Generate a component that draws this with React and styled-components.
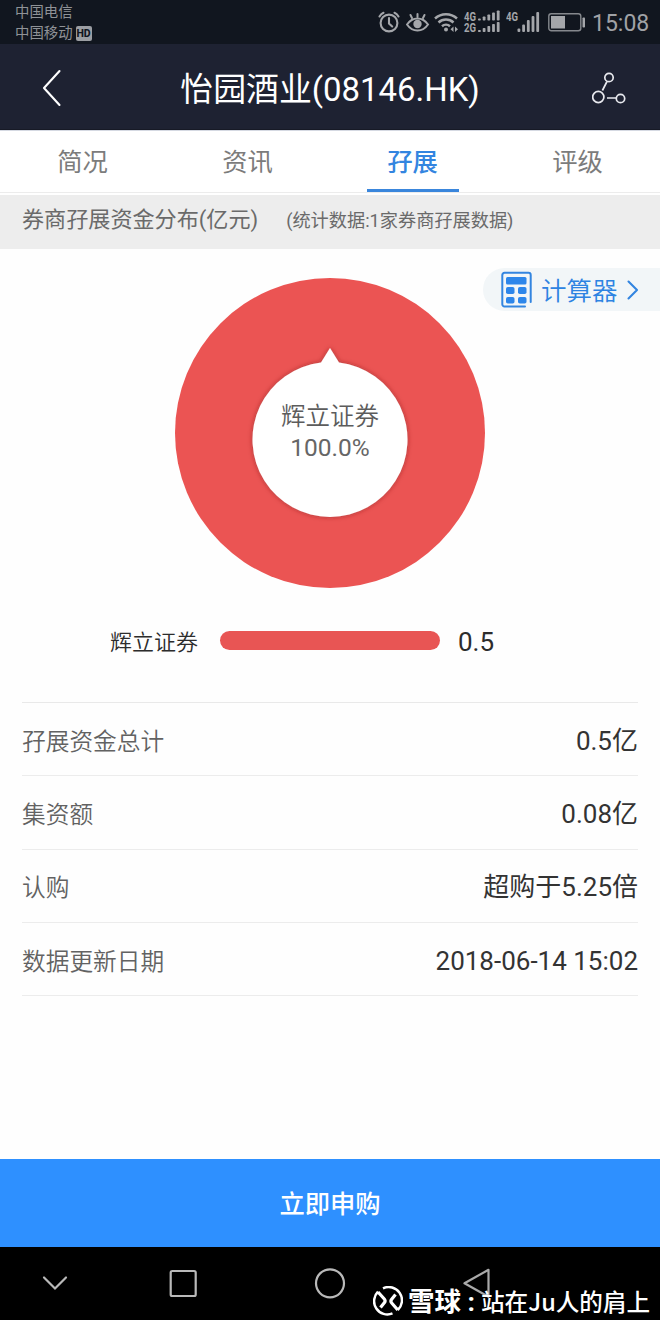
import React, { useState } from 'react';
import styled, { createGlobalStyle } from 'styled-components';

const GlobalStyle = createGlobalStyle`
	* {
		box-sizing: border-box;
	}
	body {
		margin: 0;
		background: #fefefe;
		font-family: Roboto, 'Noto Sans CJK SC', sans-serif;
	}
	button {
		font-family: inherit;
		border: none;
		background: none;
		padding: 0;
		cursor: pointer;
	}
	svg {
		display: block;
		flex: none;
	}
`;

const Screen = styled.div`
	display: flex;
	flex-direction: column;
	width: 660px;
	height: 1320px;
	overflow: hidden;
`;

const StatusBar = styled.div`
	display: flex;
	justify-content: space-between;
	height: 44px;
	padding: 0 14px 0 15px;
	background: #11161f;
	color: #a4a6aa;
`;

const Carriers = styled.div`
	font-size: 14.4px;
	line-height: 21px;
	padding-top: 2px;
	color: #8f9297;
`;

const Carrier = styled.div`
	display: flex;
	align-items: center;
	height: 21px;
`;

const HdBadge = styled.span`
	width: 16px;
	height: 15px;
	margin-left: 3px;
	border-radius: 2px;
	background: #9b9ea3;
	color: #11161f;
	font-size: 10.5px;
	font-weight: 800;
	line-height: 15px;
	text-align: center;
`;

const StatusIcons = styled.div`
	display: flex;
	height: 44px;
`;

const Clock = styled.span`
	width: 54px;
	margin-left: 5px;
	font-size: 23px;
	line-height: 47px;
	white-space: nowrap;
	color: #a0a2a6;
`;

const Header = styled.header`
	display: flex;
	align-items: center;
	justify-content: space-between;
	height: 86px;
	padding: 0 32px 0 40px;
	background: #1e2232;
	border-bottom: 1px solid #171a26;
	color: #fff;
`;

const Title = styled.h1`
	margin: 0 -4px 0 0;
	font-size: 32.9px;
	font-weight: 400;
	line-height: 86px;
	padding-top: 7px;
`;

const Tabs = styled.nav`
	display: grid;
	grid-template-columns: repeat(4, 1fr);
	height: 65px;
	padding-bottom: 2px;
	border-top: 1px solid #d5d9e2;
	background: #fff;
`;

const Tab = styled.button`
	display: flex;
	flex-direction: column;
	align-items: center;
	justify-content: flex-start;
	height: 62px;
	border-bottom: 1px solid #ececec;
	font-size: 25.3px;
	line-height: 60px;
	padding-top: 2px;
	color: ${(props) => (props.$active ? '#3385e0' : '#7c7c7c')};
	font-weight: ${(props) => (props.$active ? 500 : 400)};
	&::after {
		content: '';
		flex: none;
		width: 92px;
		height: 3px;
		margin-top: -4px;
		background: ${(props) => (props.$active ? '#3a86dc' : 'transparent')};
	}
`;

const SectionBar = styled.div`
	display: flex;
	align-items: center;
	height: 54px;
	padding: 0 22px;
	background: #ededed;
	color: #6a6a6a;
`;

const SectionTitle = styled.span`
	font-size: 22.1px;
	line-height: 49px;
	height: 54px;
`;

const SectionNote = styled.span`
	margin-left: 28px;
	font-size: 18.2px;
	line-height: 51px;
	height: 54px;
`;

const ChartArea = styled.section`
	position: relative;
	display: flex;
	justify-content: center;
	height: 339px;
	padding-top: 29px;
`;

const CalculatorLink = styled.button`
	position: absolute;
	top: 19px;
	right: 0;
	display: flex;
	align-items: center;
	width: 177px;
	height: 43px;
	padding-left: 17px;
	border-radius: 22px 0 0 22px;
	background: #f2f6f8;
	color: #2d83e2;
	font-size: 25.5px;
	font-weight: 350;
	line-height: 43px;
`;

const CalculatorText = styled.span`
	margin: 0 9px 0 9px;
	padding-top: 3px;
`;

const Ring = styled.div`
	position: relative;
	width: 310px;
	height: 310px;
`;

const RingLabel = styled.div`
	position: absolute;
	top: 123px;
	left: 0;
	width: 100%;
	text-align: center;
	font-size: 24.5px;
	font-weight: 350;
	line-height: 31px;
	color: #5c5c5c;
`;

const RingPercent = styled.div`
	font-weight: 400;
	color: #666;
`;

const Legend = styled.div`
	display: flex;
	align-items: center;
	height: 114px;
	padding: 0 0 9px 110px;
	color: #2c2c2c;
`;

const LegendName = styled.span`
	width: 110px;
	font-size: 22px;
	font-weight: 350;
	line-height: 32px;
	padding-top: 4px;
`;

const LegendTrack = styled.div`
	width: 220px;
	height: 19px;
`;

const LegendBar = styled.div`
	height: 19px;
	border-radius: 10px;
	background: #e85554;
`;

const LegendValue = styled.span`
	margin-left: 18px;
	font-size: 26px;
	padding-top: 3px;
`;

const Details = styled.dl`
	margin: 0 22px;
	border-top: 1px solid #e9e9e9;
`;

const DetailRow = styled.div`
	display: flex;
	align-items: center;
	justify-content: space-between;
	height: 73.3px;
	padding-top: 3px;
	border-bottom: 1px solid #ececec;
	line-height: 40px;
`;

const DetailLabel = styled.dt`
	padding-top: 2px;
	font-size: 23.7px;
	font-weight: 350;
	color: #626262;
`;

const DetailValue = styled.dd`
	margin: 0;
	font-size: 26px;
	color: #333;
`;

const SubscribeButton = styled.button`
	height: 88px;
	margin-top: auto;
	background: #2e90ff;
	color: #fff;
	font-size: 25.3px;
	font-weight: 500;
	line-height: 88px;
	padding-top: 2px;
`;

const NavBar = styled.div`
	position: relative;
	display: grid;
	grid-template-columns: 128px 147px 147px auto;
	height: 73px;
	padding: 20px 0 0 39px;
	background: #000;
`;

const Watermark = styled.div`
	position: absolute;
	left: 373px;
	top: 36px;
	display: flex;
	align-items: center;
	height: 36px;
	color: #fff;
	white-space: nowrap;
`;

const Brand = styled.span`
	margin-left: 5px;
	width: 73px;
	font-size: 26.5px;
	font-weight: 700;
	line-height: 36px;
	padding-top: 1px;
`;

const Author = styled.span`
	font-family: 'Noto Sans CJK SC', sans-serif;
	font-size: 23.6px;
	font-weight: 500;
	line-height: 36px;
`;

const tabs = ['简况', '资讯', '孖展', '评级'];

const brokers = [{ name: '辉立证券', value: 0.5, percent: 100 }];

const details = [
	{ label: '孖展资金总计', value: '0.5亿' },
	{ label: '集资额', value: '0.08亿' },
	{ label: '认购', value: '超购于5.25倍' },
	{ label: '数据更新日期', value: '2018-06-14 15:02' }
];

// Status bar icons, each one spans the height of the bar

const AlarmIcon = () => (
	<svg width="28" height="44" fill="none" stroke="#a4a6aa" strokeWidth="2.1" strokeLinecap="round">
		<circle cx="11" cy="23" r="8.4" />
		<path d="M11 18v5.5l3.2 3M1.5 16.5a9 9 0 0 1 4-3.7M20.5 16.5a9 9 0 0 0-4-3.7" />
	</svg>
);

const EyeIcon = () => (
	<svg width="28" height="44" fill="none" stroke="#a4a6aa" strokeWidth="2" strokeLinecap="round">
		<path d="M1 24.5c5.5-8 15.500-8 21 0c-5.500 8-15.500 8-21 0z" />
		<circle cx="11.5" cy="24" r="4.2" fill="#a4a6aa" stroke="none" />
		<path d="M11.5 14v3M4.5 15l1.500 3M18.5 15l-1.500 3" />
	</svg>
);

const WifiIcon = () => (
	<svg width="29" height="44" fill="none" stroke="#a4a6aa" strokeWidth="2.5">
		<path d="M1 18.500a16.500 16.500 0 0 1 22 0M4.500 22.500a11 11 0 0 1 15 0M8 26.300a6 6 0 0 1 8 0" />
		<circle cx="12" cy="29.5" r="2" fill="#a4a6aa" stroke="none" />
		<path d="M19.500 26.500v5.500l-3-2.700zM21 26.500v5.500l3-2.700z" fill="#a4a6aa" stroke="none" />
	</svg>
);

const NetworkText = styled.text`
	font-family: Roboto, sans-serif;
	font-size: 12.5px;
	font-weight: 700;
	fill: #a4a6aa;
`;

const DualSignalIcon = () => (
	<svg width="43" height="44" fill="#a4a6aa">
		<NetworkText x="1" y="20.5" textLength="12" lengthAdjust="spacingAndGlyphs">4G</NetworkText>
		<NetworkText x="1" y="32" textLength="12" lengthAdjust="spacingAndGlyphs">2G</NetworkText>
		{[2, 4, 6, 8, 10].map((h, i) => (
			<g key={h}>
				<rect x={15 + i * 4.7} y={20.5 - h} width="2.8" height={h} rx="0.8" />
				<rect x={15 + i * 4.7} y={32 - h} width="2.8" height={h} rx="0.8" />
			</g>
		))}
	</svg>
);

const SignalIcon = () => (
	<svg width="42" height="44" fill="#a4a6aa">
		<NetworkText x="0" y="20.5" textLength="12" lengthAdjust="spacingAndGlyphs">4G</NetworkText>
		{[3.5, 7.5, 12, 16, 20].map((h, i) => (
			<rect key={h} x={11.5 + i * 4.7} y={32 - h} width="2.8" height={h} rx="1" />
		))}
	</svg>
);

const BatteryIcon = () => (
	<svg width="39" height="44" fill="none">
		<rect x="0.8" y="13.8" width="32" height="17" rx="2.5" stroke="#85888d" strokeWidth="1.4" />
		<rect x="3" y="16" width="14" height="12.5" fill="#a4a6aa" />
		<rect x="34.5" y="17.5" width="2.5" height="10" rx="0.8" fill="#a4a6aa" />
	</svg>
);

const BackIcon = () => (
	<svg width="24" height="40" fill="none" stroke="#fff" strokeWidth="2.1">
		<path d="M19.5 4L4 21L19.5 38" strokeLinecap="round" strokeLinejoin="round" />
	</svg>
);

const ShareIcon = () => (
	<svg width="36" height="36" fill="none" stroke="#e8e9ee" strokeWidth="1.7">
		<circle cx="17" cy="8.5" r="4.2" />
		<circle cx="6.3" cy="28" r="5.6" />
		<circle cx="28.5" cy="29.5" r="4.2" />
		<path d="M15 12.5l-4.6 9M15 29h9" />
	</svg>
);

const CalculatorIcon = () => (
	<svg width="32" height="37" fill="none">
		<path
			d="M25 35.500H4.500a2.200 2.200 0 0 1-2.200-2.200V4a2.200 2.200 0 0 1 2.200-2.200h24a2.200 2.200 0 0 1 2.200 2.200v27"
			stroke="#3385e0"
			strokeWidth="2"
			strokeLinecap="round"
		/>
		<g fill="#2d86ea">
			<rect x="6" y="6" width="20.5" height="7.5" rx="1.5" />
			<rect x="6" y="16" width="8.5" height="7" rx="1.8" />
			<rect x="18" y="16" width="8.5" height="7" rx="1.8" />
			<rect x="6" y="26" width="8.5" height="6.5" rx="1.8" />
			<rect x="18" y="26" width="8.5" height="6.5" rx="1.8" />
		</g>
	</svg>
);

const ChevronIcon = () => (
	<svg width="12" height="22" fill="none" stroke="#3385e0" strokeWidth="2.1">
		<path d="M1.5 2.5L10 11L1.5 19.5" strokeLinecap="round" strokeLinejoin="round" />
	</svg>
);

const XueqiuLogo = () => (
	<svg width="30" height="30" fill="none" stroke="#fff" strokeWidth="2.5">
		<path d="M10 2.300A13.300 13.300 0 0 1 24.800 24M19.500 27.400A13.300 13.300 0 0 1 5 5.700" />
		<path d="M5 6l6.300 7q1.500 1.800 .2 3.500l-4 5M24.800 24l-6.100-7q-1.500-1.800-.2-3.500l4-5" strokeWidth="3.200" />
	</svg>
);

function RingChart({ broker }) {
	return (
		<Ring>
			<svg width="310" height="310">
				<defs>
					<filter id="holeShadow" x="-20%" y="-20%" width="140%" height="140%">
						<feDropShadow dx="0" dy="0" stdDeviation="2.5" floodColor="#7d2020" floodOpacity="0.6" />
					</filter>
				</defs>
				<circle cx="155" cy="155" r="155" fill="#eb5453" />
				<path
					d="M155 70L164 84.5A77.5 77.5 0 1 1 146 84.5Z"
					fill="#fff"
					filter="url(#holeShadow)"
				/>
			</svg>
			<RingLabel>
				<div>{broker.name}</div>
				<RingPercent>{broker.percent.toFixed(1)}%</RingPercent>
			</RingLabel>
		</Ring>
	);
}

function App() {
	const [ activeTab, setActiveTab ] = useState('孖展');

	return (
		<Screen>
			<GlobalStyle />

			<StatusBar>
				<Carriers>
					<Carrier>中国电信</Carrier>
					<Carrier>
						中国移动<HdBadge>HD</HdBadge>
					</Carrier>
				</Carriers>
				<StatusIcons>
					<AlarmIcon />
					<EyeIcon />
					<WifiIcon />
					<DualSignalIcon />
					<SignalIcon />
					<BatteryIcon />
					<Clock>15:08</Clock>
				</StatusIcons>
			</StatusBar>

			<Header>
				<BackIcon />
				<Title>怡园酒业(08146.HK)</Title>
				<ShareIcon />
			</Header>

			<Tabs>
				{tabs.map((tab) => (
					<Tab key={tab} $active={tab === activeTab} onClick={() => setActiveTab(tab)}>
						{tab}
					</Tab>
				))}
			</Tabs>

			<SectionBar>
				<SectionTitle>券商孖展资金分布(亿元)</SectionTitle>
				<SectionNote>(统计数据:1家券商孖展数据)</SectionNote>
			</SectionBar>

			<ChartArea>
				<RingChart broker={brokers[0]} />
				<CalculatorLink>
					<CalculatorIcon />
					<CalculatorText>计算器</CalculatorText>
					<ChevronIcon />
				</CalculatorLink>
			</ChartArea>

			{brokers.map((broker) => (
				<Legend key={broker.name}>
					<LegendName>{broker.name}</LegendName>
					<LegendTrack>
						<LegendBar style={{ width: `${broker.percent}%` }} />
					</LegendTrack>
					<LegendValue>{broker.value}</LegendValue>
				</Legend>
			))}

			<Details>
				{details.map((item) => (
					<DetailRow key={item.label}>
						<DetailLabel>{item.label}</DetailLabel>
						<DetailValue>{item.value}</DetailValue>
					</DetailRow>
				))}
			</Details>

			<SubscribeButton>立即申购</SubscribeButton>

			<NavBar>
				<svg width="32" height="32" fill="none" stroke="#b9b9b9" strokeWidth="2.2">
					<path d="M5 10.5L16 21.5L27 10.5" strokeLinecap="round" />
				</svg>
				<svg width="32" height="32" fill="none" stroke="#b9b9b9" strokeWidth="2.2">
					<rect x="3.7" y="4" width="25" height="25" rx="1.5" />
				</svg>
				<svg width="32" height="32" fill="none" stroke="#b9b9b9" strokeWidth="2.2">
					<circle cx="16" cy="16.3" r="14" />
				</svg>
				<svg width="32" height="32" fill="none" stroke="#a9a9a9" strokeWidth="2.2">
					<path d="M3.5 16.3L27.5 2.8V29.8Z" strokeLinejoin="round" />
				</svg>
				<Watermark>
					<XueqiuLogo />
					<Brand>雪球 :</Brand>
					<Author>站在Ju人的肩上</Author>
				</Watermark>
			</NavBar>
		</Screen>
	);
}

export default App;
